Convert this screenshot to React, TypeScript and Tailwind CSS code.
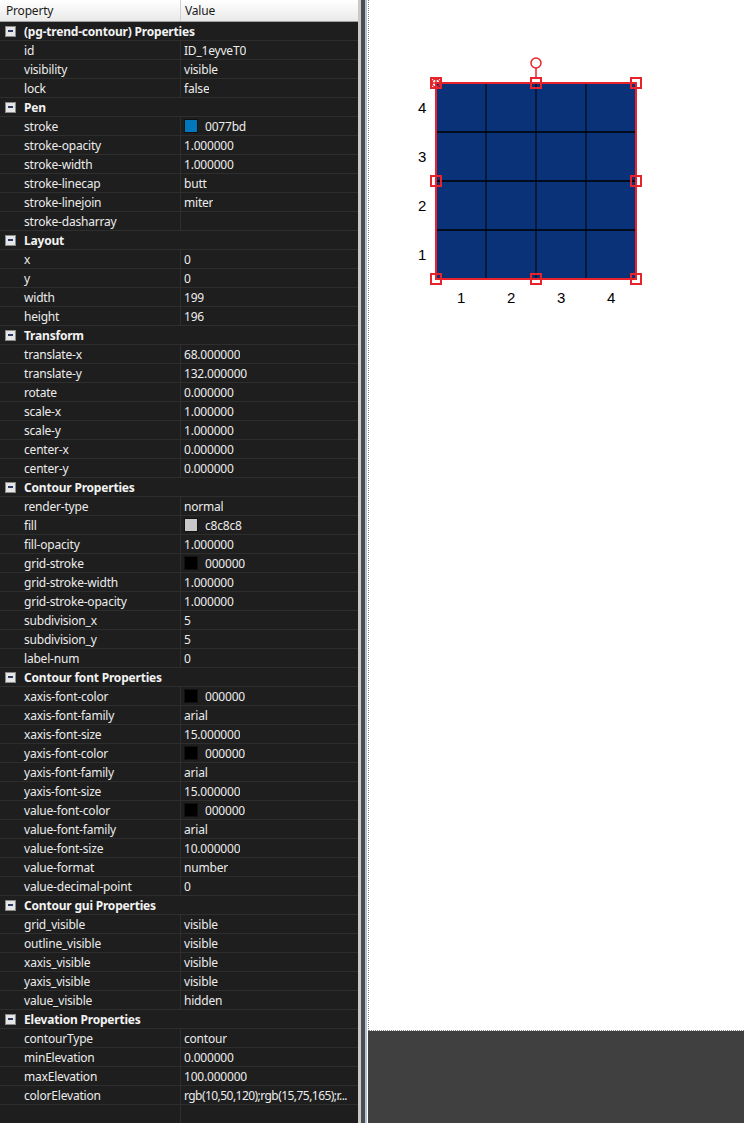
import React from 'react'

type Row =
  | { kind: 'section'; label: string }
  | { kind: 'prop'; name: string; value: string; swatch?: string }

const rows: Row[] = [
  { kind: 'section', label: '(pg-trend-contour) Properties' },
  { kind: 'prop', name: 'id', value: 'ID_1eyveT0' },
  { kind: 'prop', name: 'visibility', value: 'visible' },
  { kind: 'prop', name: 'lock', value: 'false' },
  { kind: 'section', label: 'Pen' },
  { kind: 'prop', name: 'stroke', value: '0077bd', swatch: '#0077bd' },
  { kind: 'prop', name: 'stroke-opacity', value: '1.000000' },
  { kind: 'prop', name: 'stroke-width', value: '1.000000' },
  { kind: 'prop', name: 'stroke-linecap', value: 'butt' },
  { kind: 'prop', name: 'stroke-linejoin', value: 'miter' },
  { kind: 'prop', name: 'stroke-dasharray', value: '' },
  { kind: 'section', label: 'Layout' },
  { kind: 'prop', name: 'x', value: '0' },
  { kind: 'prop', name: 'y', value: '0' },
  { kind: 'prop', name: 'width', value: '199' },
  { kind: 'prop', name: 'height', value: '196' },
  { kind: 'section', label: 'Transform' },
  { kind: 'prop', name: 'translate-x', value: '68.000000' },
  { kind: 'prop', name: 'translate-y', value: '132.000000' },
  { kind: 'prop', name: 'rotate', value: '0.000000' },
  { kind: 'prop', name: 'scale-x', value: '1.000000' },
  { kind: 'prop', name: 'scale-y', value: '1.000000' },
  { kind: 'prop', name: 'center-x', value: '0.000000' },
  { kind: 'prop', name: 'center-y', value: '0.000000' },
  { kind: 'section', label: 'Contour Properties' },
  { kind: 'prop', name: 'render-type', value: 'normal' },
  { kind: 'prop', name: 'fill', value: 'c8c8c8', swatch: '#c8c8c8' },
  { kind: 'prop', name: 'fill-opacity', value: '1.000000' },
  { kind: 'prop', name: 'grid-stroke', value: '000000', swatch: '#000000' },
  { kind: 'prop', name: 'grid-stroke-width', value: '1.000000' },
  { kind: 'prop', name: 'grid-stroke-opacity', value: '1.000000' },
  { kind: 'prop', name: 'subdivision_x', value: '5' },
  { kind: 'prop', name: 'subdivision_y', value: '5' },
  { kind: 'prop', name: 'label-num', value: '0' },
  { kind: 'section', label: 'Contour font Properties' },
  { kind: 'prop', name: 'xaxis-font-color', value: '000000', swatch: '#000000' },
  { kind: 'prop', name: 'xaxis-font-family', value: 'arial' },
  { kind: 'prop', name: 'xaxis-font-size', value: '15.000000' },
  { kind: 'prop', name: 'yaxis-font-color', value: '000000', swatch: '#000000' },
  { kind: 'prop', name: 'yaxis-font-family', value: 'arial' },
  { kind: 'prop', name: 'yaxis-font-size', value: '15.000000' },
  { kind: 'prop', name: 'value-font-color', value: '000000', swatch: '#000000' },
  { kind: 'prop', name: 'value-font-family', value: 'arial' },
  { kind: 'prop', name: 'value-font-size', value: '10.000000' },
  { kind: 'prop', name: 'value-format', value: 'number' },
  { kind: 'prop', name: 'value-decimal-point', value: '0' },
  { kind: 'section', label: 'Contour gui Properties' },
  { kind: 'prop', name: 'grid_visible', value: 'visible' },
  { kind: 'prop', name: 'outline_visible', value: 'visible' },
  { kind: 'prop', name: 'xaxis_visible', value: 'visible' },
  { kind: 'prop', name: 'yaxis_visible', value: 'visible' },
  { kind: 'prop', name: 'value_visible', value: 'hidden' },
  { kind: 'section', label: 'Elevation Properties' },
  { kind: 'prop', name: 'contourType', value: 'contour' },
  { kind: 'prop', name: 'minElevation', value: '0.000000' },
  { kind: 'prop', name: 'maxElevation', value: '100.000000' },
  { kind: 'prop', name: 'colorElevation', value: 'rgb(10,50,120);rgb(15,75,165);r...' },
  { kind: 'prop', name: '', value: '' },
]

function CollapseBox() {
  return (
    <div className="flex h-[11px] w-[11px] items-center justify-center border border-[#8a8a8a] bg-[#e6e6e6]">
      <div className="h-[2px] w-[5px] bg-[#2b3a66]" />
    </div>
  )
}

function PropertyRow({ row }: { row: Row }) {
  if (row.kind === 'section') {
    return (
      <div className="flex h-[19px] items-center border-b border-[#2e2e2e]">
        <div className="flex w-[24px] shrink-0 justify-center pr-[4px]">
          <CollapseBox />
        </div>
        <span className="pt-[2px] font-bold text-[#f2f2f2]">{row.label}</span>
      </div>
    )
  }
  // long values get squeezed a bit so the trailing "r..." stays visible
  const long = row.value.length > 20
  return (
    <div className="flex h-[19px] items-center border-b border-[#2e2e2e]">
      <div className="flex h-full w-[181px] shrink-0 items-center border-r border-[#2e2e2e] pl-[24px] pt-[2px] text-[#ececec]">
        {row.name}
      </div>
      <div className="flex h-full min-w-0 items-center overflow-hidden whitespace-nowrap pl-[3px] text-[#ececec]">
        {row.swatch && (
          <span
            className="mr-[7px] h-[14px] w-[14px] shrink-0 border border-[#111]"
            style={{ backgroundColor: row.swatch }}
          />
        )}
        <span className={long ? 'pt-[2px] tracking-[-0.55px]' : 'pt-[2px]'}>{row.value}</span>
      </div>
    </div>
  )
}

function ContourShape() {
  const L = 67
  const T = 83
  const R = 267
  const B = 279
  const red = '#e8232b'
  const handles: [number, number][] = [
    [L, T], [167, T], [R, T],
    [L, 181], [R, 181],
    [L, B], [167, B], [R, B],
  ]
  return (
    <svg className="absolute left-0 top-0" width="376" height="1030">
      <rect x={L} y={T} width={R - L} height={B - T} fill="#0a3278" />
      {[117, 167, 217].map((x) => (
        <line key={x} x1={x} y1={T} x2={x} y2={B} stroke="#000" strokeWidth="1" />
      ))}
      {[132, 181, 230].map((y) => (
        <line key={y} x1={L} y1={y} x2={R} y2={y} stroke="#000" strokeWidth="1.5" />
      ))}
      <rect x={L} y={T} width={R - L} height={B - T} fill="none" stroke={red} strokeWidth="2" />
      {handles.map(([x, y]) => (
        <rect key={`${x}-${y}`} x={x - 5} y={y - 5} width="10" height="10" fill="none" stroke={red} strokeWidth="2" />
      ))}
      <circle cx={L} cy={T} r="4" fill="none" stroke={red} strokeWidth="1.5" />
      <line x1={L - 4} y1={T} x2={L + 4} y2={T} stroke={red} strokeWidth="1.5" />
      <line x1={L} y1={T - 4} x2={L} y2={T + 4} stroke={red} strokeWidth="1.5" />
      <line x1="167" y1="68" x2="167" y2="78" stroke={red} strokeWidth="1.5" />
      <circle cx="167" cy="63" r="5" fill="#fff" stroke={red} strokeWidth="1.5" />
      <g fontFamily="'Liberation Sans', Arial, sans-serif" fontSize="15" fill="#000" textAnchor="middle">
        {['4', '3', '2', '1'].map((t, i) => (
          <text key={`y${t}`} x="53" y={113 + i * 49}>{t}</text>
        ))}
        {['1', '2', '3', '4'].map((t, i) => (
          <text key={`x${t}`} x={92 + i * 50} y={303}>{t}</text>
        ))}
      </g>
    </svg>
  )
}

export default function App() {
  return (
    <div className="flex h-[1123px] w-[744px] overflow-hidden bg-[#404040] font-['Noto_Sans','Segoe_UI','Liberation_Sans',sans-serif] text-[12px] tracking-[-0.2px]">
      <div className="flex w-[358px] shrink-0 flex-col bg-[#1e1e1e]">
        <div className="flex h-[22px] shrink-0 border-b border-[#a0a0a0] bg-gradient-to-b from-[#ffffff] to-[#e9e9e9] text-[#1a1a1a]">
          <div className="flex w-[181px] items-center border-r border-[#d0d0d0] pl-[6px]">Property</div>
          <div className="flex items-center pl-[4px]">Value</div>
        </div>
        <div className="flex flex-col">
          {rows.map((row, i) => (
            <PropertyRow key={i} row={row} />
          ))}
        </div>
      </div>
      <div className="w-[3px] shrink-0 bg-[#c9c9c9]" />
      <div className="w-[4px] shrink-0 bg-[#4d4d4d]" />
      <div className="w-[2px] shrink-0 bg-[#b6c3dd]" />
      <div className="w-[1px] shrink-0 bg-white" />
      <div className="flex min-w-0 flex-1 flex-col">
        <div className="relative h-[1031px] shrink-0 border-b border-l border-dotted border-[#808080] bg-white">
          <ContourShape />
        </div>
      </div>
    </div>
  )
}
